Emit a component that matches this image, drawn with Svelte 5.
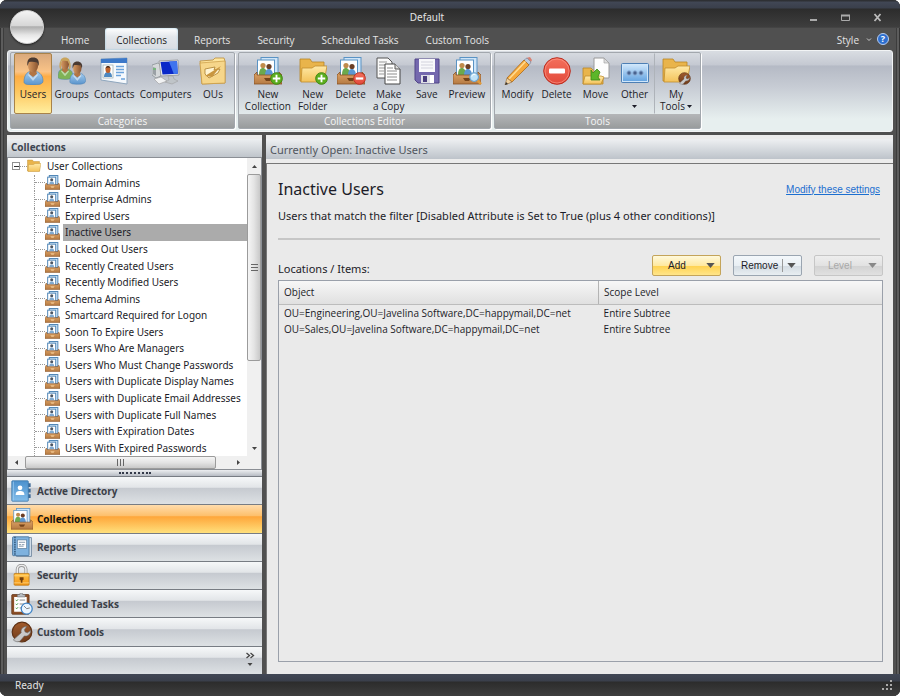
<script>
  const tabs = ['Home', 'Collections', 'Reports', 'Security', 'Scheduled Tasks', 'Custom Tools'];

  const groups = [
    {
      name: 'Categories',
      size: 'categories',
      items: [
        { icon: 'user', lines: ['Users'], active: true },
        { icon: 'group', lines: ['Groups'] },
        { icon: 'contacts', lines: ['Contacts'] },
        { icon: 'computer', lines: ['Computers'] },
        { icon: 'ou', lines: ['OUs'] }
      ]
    },
    {
      name: 'Collections Editor',
      size: 'editor',
      items: [
        { icon: 'collection', badge: 'add', lines: ['New', 'Collection'] },
        { icon: 'folder', badge: 'add', lines: ['New', 'Folder'] },
        { icon: 'collection', badge: 'remove', lines: ['Delete'] },
        { icon: 'copy', lines: ['Make', 'a Copy'] },
        { icon: 'save', lines: ['Save'] },
        { icon: 'collection', badge: 'search', lines: ['Preview'] }
      ]
    },
    {
      name: 'Tools',
      size: 'tools',
      items: [
        { icon: 'pencil', lines: ['Modify'] },
        { icon: 'delete', lines: ['Delete'] },
        { icon: 'move', lines: ['Move'] },
        { icon: 'other', lines: ['Other'], menu: true },
        { icon: 'folder', badge: 'wrench', lines: ['My', 'Tools'], menu: true, divided: true }
      ]
    }
  ];

  const collections = [
    'Domain Admins',
    'Enterprise Admins',
    'Expired Users',
    'Inactive Users',
    'Locked Out Users',
    'Recently Created Users',
    'Recently Modified Users',
    'Schema Admins',
    'Smartcard Required for Logon',
    'Soon To Expire Users',
    'Users Who Are Managers',
    'Users Who Must Change Passwords',
    'Users with Duplicate Display Names',
    'Users with Duplicate Email Addresses',
    'Users with Duplicate Full Names',
    'Users with Expiration Dates',
    'Users With Expired Passwords'
  ];

  const sections = [
    { icon: 'directory', name: 'Active Directory' },
    { icon: 'collection', name: 'Collections' },
    { icon: 'report', name: 'Reports' },
    { icon: 'lock', name: 'Security' },
    { icon: 'tasks', name: 'Scheduled Tasks' },
    { icon: 'wrench', name: 'Custom Tools' }
  ];

  const rows = [
    { object: 'OU=Engineering,OU=Javelina Software,DC=happymail,DC=net', scope: 'Entire Subtree' },
    { object: 'OU=Sales,OU=Javelina Software,DC=happymail,DC=net', scope: 'Entire Subtree' }
  ];

  let activeTab = $state('Collections');
  let selected = $state('Inactive Users');
  let section = $state('Collections');
</script>

{#snippet person(hair, shirt)}
  <path d="M1 25c0-8 4-11 9-11s10 3 10 10c0 3-4 4-10 4s-9-1-9-3z" fill={shirt} stroke="#4d82b4" stroke-width=".6" />
  <path d="M7 13h6l1 4-4 3-4-3z" fill="#b27544" />
  <ellipse cx="10" cy="9" rx="5" ry="6.500" fill="url(#skin)" />
  <path d="M4.500 9C3.500 3 6 .5 10 .5s7 2.500 5.500 8.500L14 5.500c-3-1-5-1-8-.5z" fill={hair} />
  <path d="M6 17l4 4 4-4 1 1-5 6-5-6z" fill="#fff" opacity=".5" />
{/snippet}

{#snippet wrenchDisc()}
  <circle cx="14" cy="14" r="12.500" fill="url(#brown)" stroke="#5e3114" stroke-width="1.500" />
  <path d="M3 24L13 15c-1-5 2-8 7-8l-3 4 1 3 3 1 4-3c0 5-4 8-8 7l-6 7c-3 1-6 0-8-2z" fill="#c9c9c9" stroke="#666" stroke-width=".8" />
{/snippet}

{#snippet icon(name)}
  <svg class="icon" viewBox="0 0 28 28" aria-hidden="true">
    {#if name === 'user'}
      <g transform="translate(4 0)">{@render person('#4a3a32', 'url(#shirt)')}</g>
    {:else if name === 'group'}
      <g transform="translate(-1 0) scale(.8)">
        {@render person('#c9a45c', '#7fb356')}
        <path d="M5 6c-2 3-1 8 0 9M15 6c2 3 1 8 0 9" fill="none" stroke="#c9a45c" stroke-width="2" />
      </g>
      <g transform="translate(11 4) scale(.83)">{@render person('#4a3a32', 'url(#shirt)')}</g>
    {:else if name === 'contacts'}
      <path d="M1 2l26-1v26L1 23z" fill="#f5f9fd" stroke="#8ea6bd" />
      <path d="M1 2l26-1v5L1 6z" fill="#3c78c8" />
      <rect x="3" y="8" width="10" height="13" fill="#fff" stroke="#9aa" stroke-width=".7" />
      <path d="M4 20c0-4 2-5 4-5s4 1 4 5z" fill="#4c88c0" />
      <ellipse cx="8" cy="12.500" rx="2.500" ry="3.500" fill="#c0622a" />
      <path d="M5.500 12c0-4 5-4 5 0l-1-1.500H6.500z" fill="#33221a" />
      <path d="M16 9.500h8M16 12.500h8M16 15.500h8M16 18.500h5M21 22h4" stroke="#6ba3dc" stroke-width="1.500" />
    {:else if name === 'computer'}
      <path d="M0 8l6-2 3 2v11l-5 2-4-3z" fill="#d5d8da" stroke="#83898e" stroke-width=".7" />
      <path d="M1 10l3 1v8l-3-2z" fill="#9aa0a5" />
      <path d="M1 12h3" stroke="#5c5" />
      <path d="M7 4l19-1 1 15-18 1z" fill="#e8ebee" stroke="#888" stroke-width=".7" />
      <path d="M8.500 5l16.500-.8.800 12.500L10.500 17.500z" fill="#0a28c8" />
      <path d="M17 4.600l8-.4.800 12.500-4 .2z" fill="#3f74ee" />
      <path d="M16 19h5l1 3 4 2-6 3-7-2 4-2z" fill="#bfc4c8" stroke="#999" stroke-width=".5" />
      <path d="M2 22l7-2 6 4-8 3z" fill="#f1f2f3" stroke="#9a9a9a" stroke-width=".6" />
    {:else if name === 'ou'}
      <path d="M1 4l13-1 2-2h9l1 3v22L3 27z" fill="url(#gold)" stroke="#bd8d36" stroke-width=".8" />
      <path d="M1 6l25-2v22L3 27z" fill="#f6d68a" stroke="#c99b45" stroke-width=".7" />
      <path d="M6 12l10-2-1 3 6-1-2 4-9 5-4-4z" fill="#fff4d2" stroke="#a97d2e" stroke-width=".8" />
      <path d="M6 19l16-10-9 11z" fill="#c9963f" />
    {:else if name === 'collection'}
      <rect x="7" y=".5" width="17" height="19" fill="#cfe5f8" stroke="#5a93c4" />
      <rect x="3.500" y="3" width="17" height="17" fill="#fff" stroke="#5a93c4" />
      <path d="M5 18c0-6 2-7 4-7s4 2 4 7z" fill="#6ba94e" />
      <path d="M11 19c0-6 2-7 4-7s4 2 4 7z" fill="#5b97d2" />
      <circle cx="9" cy="8.500" r="2.600" fill="#c08b4c" />
      <circle cx="15" cy="9.500" r="2.600" fill="#6b3e24" />
      <path d="M0 18l3-3v3h22v-3l3 3v9H0z" fill="url(#wood)" stroke="#885225" stroke-width=".8" />
      <path d="M10 21h8l-2 3h-4z" fill="#754319" />
    {:else if name === 'leaf'}
      <rect x="8" y="1" width="16" height="17" fill="#d7e9f8" stroke="#4b83b5" stroke-width="1.800" />
      <rect x="5" y="4" width="15" height="15" fill="#fff" stroke="#4b83b5" stroke-width="1.800" />
      <circle cx="12.500" cy="9" r="2.800" fill="#4b5563" />
      <path d="M8 17c0-4 2-5 4.500-5s4.500 1 4.500 5z" fill="#7fa9d0" />
      <path d="M0 18l3-3v3h22v-3l3 3v9H0z" fill="url(#wood)" stroke="#885225" />
      <path d="M10 21h8l-2 3h-4z" fill="#f0c48e" />
    {:else if name === 'folder'}
      <path d="M1 2h10l2 3h12v19H1z" fill="#e9b44b" stroke="#b98523" stroke-width=".8" />
      <path d="M3 11h10l3-2h12l-3 16H2z" fill="url(#gold)" stroke="#c08d2d" stroke-width=".8" />
    {:else if name === 'copy'}
      <path d="M2 1h11l4 4v16H2z" fill="#fafafa" stroke="#555" />
      <path d="M4 5h8M4 8h10M4 11h8M4 14h5M4 17h5" stroke="#999" />
      <path d="M10 7h10l5 5v15H10z" fill="#fff" stroke="#444" />
      <path d="M20 7v5h5" fill="#ddd" stroke="#555" />
      <path d="M12 11h6M12 14h10M12 17h10M12 20h10M12 23h10" stroke="#8d8d8d" />
    {:else if name === 'save'}
      <path d="M2 2h24v24H5l-3-3z" fill="#7468ae" stroke="#514588" />
      <rect x="6" y="2" width="16" height="13" fill="#f8f8fb" />
      <path d="M8 5h12M8 8h12M8 11h12" stroke="#d2d2dd" />
      <rect x="8" y="18" width="13" height="8" fill="#dedee5" />
      <rect x="10" y="19" width="4" height="6" fill="#493d7d" />
      <path d="M17 18h4v8h-4z" fill="#fff" />
    {:else if name === 'pencil'}
      <path d="M22 1l4-1 2 3-2 4-4-3z" fill="#d88273" />
      <path d="M20 3l3-2 4 4-2 3z" fill="#bccadb" stroke="#75879b" stroke-width=".6" />
      <path d="M20 3l5 5L8 25l-5-4z" fill="#f6a93b" stroke="#aa6a1d" stroke-width=".8" />
      <path d="M21.500 4.500L5 22" stroke="#ffdc93" stroke-width="1.500" />
      <path d="M3 21l5 4-7 3z" fill="#efd1a1" stroke="#926327" stroke-width=".6" />
      <path d="M2 25l2 2-3 1z" fill="#333" />
    {:else if name === 'delete'}
      <circle cx="14" cy="14" r="13.300" fill="url(#red)" stroke="#ba2e20" />
      <circle cx="14" cy="14" r="12" fill="none" stroke="#ff9f8f" stroke-width=".6" />
      <rect x="6" y="11.500" width="16" height="5" rx="1" fill="#fff" />
    {:else if name === 'move'}
      <path d="M1 11h8l2 2h10v14H1z" fill="#e9b44b" stroke="#b98523" stroke-width=".8" />
      <path d="M12 1h10l5 5v15H12z" fill="#fdfdfd" stroke="#9a9a9a" />
      <path d="M22 1v5h5z" fill="#ddd" stroke="#9a9a9a" stroke-width=".6" />
      <path d="M3 19h16l3 1-3 7H1z" fill="url(#gold)" stroke="#c08d2d" stroke-width=".8" />
      <path d="M18 15l-3-3-4 4-2-3v10h9l-2-3z" fill="#5cb629" stroke="#3b8614" stroke-width=".8" />
    {:else if name === 'other'}
      <rect x=".5" y="6.500" width="27" height="19" rx="1" fill="url(#sky)" stroke="#4d7fb4" />
      <rect x="1.500" y="7.500" width="25" height="17" fill="none" stroke="#cfe6fa" />
      <g fill="#49638f" stroke="#8fb0d8">
        <circle cx="8" cy="16" r="2.200" />
        <circle cx="14" cy="16" r="2.200" />
        <circle cx="20" cy="16" r="2.200" />
      </g>
    {:else if name === 'directory'}
      <path d="M21 4h4v5h-4zM21 11h4v5h-4zM21 18h4v5h-4z" fill="#3d6b99" />
      <rect x="1" y="1" width="21" height="26" rx="1" fill="url(#book)" stroke="#3b75a8" />
      <path d="M3 2v24" stroke="#9dccf1" />
      <circle cx="11.500" cy="10" r="3" fill="#fff" />
      <path d="M6 19c0-4 2-5 5.500-5s5.500 1 5.500 5z" fill="#fff" />
    {:else if name === 'report'}
      <path d="M7 2h19v24H7z" fill="#d9e4ee" stroke="#5f7b94" />
      <rect x="2" y="1" width="21" height="24" rx="1" fill="#7fb2de" stroke="#3e6c96" />
      <path d="M5 1v24" stroke="#33597d" stroke-width="2" stroke-dasharray="2 1" />
      <rect x="8" y="5" width="12" height="11" fill="#fff" stroke="#496f91" stroke-width=".8" />
      <path d="M10 8h8M10 11h3M14 11h3M10 13h6" stroke="#6a8299" />
    {:else if name === 'lock'}
      <path d="M8 14V7c0-7 11-7 11 0v7" fill="none" stroke="#999" stroke-width="4" />
      <path d="M8 14V7c0-7 11-7 11 0v7" fill="none" stroke="#eee" stroke-width="1.800" />
      <rect x="4" y="12" width="19" height="15" rx="1" fill="url(#orange)" stroke="#bd7613" />
      <path d="M4 15h19M4 24h19" stroke="#ffd98a" />
      <path d="M11 17h5v3l-1.500 1v3h-2v-3L11 20z" fill="#74400d" />
    {:else if name === 'tasks'}
      <rect x="1" y="2" width="22" height="25" rx="1" fill="#8d5028" stroke="#613315" />
      <path d="M4 5h16v19H4z" fill="#fff" />
      <path d="M8 5V2h3c0-3 4-3 4 0h3v3z" fill="#b9bec3" stroke="#666" stroke-width=".7" />
      <path d="M6 9l1.500 1L9 8M6 14l1.500 1L9 13M6 19l1.500 1L9 18" fill="none" stroke="#379034" />
      <path d="M11 9h7M11 14h6M11 19h3" stroke="#6a6a6a" />
      <circle cx="20" cy="20" r="7" fill="#eaf5ff" stroke="#3f83c5" stroke-width="1.600" />
      <path d="M16.500 16.500L20 20l4-1" fill="none" stroke="#666" />
    {:else if name === 'wrench'}
      {@render wrenchDisc()}
    {/if}
  </svg>
{/snippet}

{#snippet badge(name)}
  <svg class="badge" viewBox="0 0 14 14" aria-hidden="true">
    {#if name === 'add'}
      <circle cx="7" cy="7" r="6.300" fill="#5cae1f" stroke="#3d8310" />
      <path d="M7 3v8M3 7h8" stroke="#fff" stroke-width="2" />
    {:else if name === 'remove'}
      <circle cx="7" cy="7" r="6.300" fill="url(#red)" stroke="#b92d20" />
      <path d="M3 7h8" stroke="#fff" stroke-width="2.400" />
    {:else if name === 'search'}
      <path d="M8 8l5 5" stroke="#e09a3a" stroke-width="2.600" />
      <circle cx="5.500" cy="5.500" r="4.700" fill="#bfe2f8" stroke="#6ba2cd" stroke-width="1.200" />
      <path d="M3 5c0-2 2-3 4-2" fill="none" stroke="#fff" />
    {:else}
      <g transform="scale(.5)">{@render wrenchDisc()}</g>
    {/if}
  </svg>
{/snippet}

{#snippet arrow()}
  <svg class="arrow" viewBox="0 0 10 6" aria-hidden="true"><path d="M0 0h10L5 6z" fill="currentColor" /></svg>
{/snippet}

<svg class="defs" aria-hidden="true">
  <defs>
    <linearGradient id="skin"><stop stop-color="#d79a62" /><stop offset="1" stop-color="#8b5530" /></linearGradient>
    <linearGradient id="shirt" x2="0" y2="1"><stop stop-color="#a8cff0" /><stop offset="1" stop-color="#5a94cc" /></linearGradient>
    <linearGradient id="gold" x2="0" y2="1"><stop stop-color="#ffe9a6" /><stop offset="1" stop-color="#f3c25a" /></linearGradient>
    <linearGradient id="wood" x2="0" y2="1"><stop stop-color="#e0a566" /><stop offset="1" stop-color="#b57a43" /></linearGradient>
    <linearGradient id="red" x2="0" y2="1"><stop stop-color="#f4705c" /><stop offset="1" stop-color="#e2493a" /></linearGradient>
    <linearGradient id="sky" x2="0" y2="1"><stop stop-color="#d5eafc" /><stop offset="1" stop-color="#5d9fdf" /></linearGradient>
    <linearGradient id="book" x2="0" y2="1"><stop stop-color="#4c91cd" /><stop offset="1" stop-color="#82bdea" /></linearGradient>
    <linearGradient id="orange" x2="0" y2="1"><stop stop-color="#ffc144" /><stop offset="1" stop-color="#f39718" /></linearGradient>
    <linearGradient id="brown" x2="0" y2="1"><stop stop-color="#a15b2c" /><stop offset="1" stop-color="#6f3b1b" /></linearGradient>
  </defs>
</svg>

<div class="window">
  <header class="titlebar">
    <button class="orb" aria-label="Application menu"></button>
    <span class="title">Default</span>
    <div class="window-buttons">
      <button aria-label="Minimize"><svg viewBox="0 0 9 9"><path d="M1 7h7" stroke="#aaa" stroke-width="2" /></svg></button>
      <button aria-label="Maximize"><svg viewBox="0 0 9 9"><path d="M.5 2.500h8v5h-8z" fill="none" stroke="#aaa" /><path d="M0 2.500h9" stroke="#aaa" stroke-width="2" /></svg></button>
      <button aria-label="Close"><svg viewBox="0 0 9 9"><path d="M1.500 1l6 7M7.500 1l-6 7" stroke="#bbb" stroke-width="1.800" /></svg></button>
    </div>
  </header>

  <nav class="tabs">
    {#each tabs as tab}
      <button class="tab" class:active={activeTab === tab} onclick={() => (activeTab = tab)}>{tab}</button>
    {/each}
    <button class="style-menu">
      Style
      <svg viewBox="0 0 6 4" aria-hidden="true"><path d="M1 .5l2 2 2-2" fill="none" stroke="#ccc" /></svg>
    </button>
    <button class="help" aria-label="Help">?</button>
  </nav>

  <div class="ribbon">
    {#each groups as group}
      <section class="group {group.size}">
        <div class="group-items">
          {#each group.items as item}
            <button class="tool" class:active={item.active} class:divided={item.divided}>
              <span class="tool-icon">
                {@render icon(item.icon)}
                {#if item.badge}{@render badge(item.badge)}{/if}
              </span>
              {#each item.lines as line, i}
                <span class="tool-line">
                  {line}{#if item.menu && i > 0}{@render arrow()}{/if}
                </span>
              {/each}
              {#if item.menu && item.lines.length === 1}
                <span class="tool-line">{@render arrow()}</span>
              {/if}
            </button>
          {/each}
        </div>
        <div class="group-name">{group.name}</div>
      </section>
    {/each}
  </div>

  <div class="workspace">
    <aside class="sidebar">
      <h2 class="sidebar-title">Collections</h2>
      <div class="tree-box">
        <ul class="tree">
          <li class="root">
            <button class="toggle" aria-label="Collapse"></button>
            <span class="root-line"></span>
            {@render icon('folder')}
            <span>User Collections</span>
          </li>
          {#each collections as name}
            <li class="leaf">
              {@render icon('leaf')}
              <button class="leaf-name" class:selected={selected === name} onclick={() => (selected = name)}>{name}</button>
            </li>
          {/each}
        </ul>
        <div class="vscroll">
          <button class="up" aria-label="Scroll up">{@render arrow()}</button>
          <div class="thumb"><span class="grip"></span></div>
          <button class="down" aria-label="Scroll down">{@render arrow()}</button>
        </div>
        <div class="hscroll">
          <button class="left" aria-label="Scroll left">{@render arrow()}</button>
          <div class="thumb"><span class="grip"></span></div>
          <button class="right" aria-label="Scroll right">{@render arrow()}</button>
        </div>
        <div class="corner"></div>
      </div>
      <div class="splitter"><span></span></div>
      <nav class="sections">
        {#each sections as item}
          <button class="section" class:active={section === item.name} onclick={() => (section = item.name)}>
            {@render icon(item.icon)}
            {item.name}
          </button>
        {/each}
        <button class="section overflow" aria-label="Configure buttons">
          <svg viewBox="0 0 10 16" aria-hidden="true">
            <path d="M1.500 1l3 2.500-3 2.500M5.500 1l3 2.500-3 2.500" fill="none" stroke="#444" stroke-width="1.300" />
            <path d="M2.500 11h5L5 14z" fill="#444" />
          </svg>
        </button>
      </nav>
    </aside>

    <main class="content">
      <div class="open-bar">Currently Open: Inactive Users</div>
      <div class="panel">
        <div class="heading">
          <h1>Inactive Users</h1>
          <a href="#settings">Modify these settings</a>
        </div>
        <p>Users that match the filter [Disabled Attribute is Set to True (plus 4 other conditions)]</p>
        <hr />
        <div class="list-bar">
          <span class="list-label">Locations / Items:</span>
          <button class="action add"><span>Add</span>{@render arrow()}</button>
          <button class="action remove"><span>Remove</span><i></i>{@render arrow()}</button>
          <button class="action" disabled><span>Level</span>{@render arrow()}</button>
        </div>
        <div class="list">
          <table>
            <thead>
              <tr><th>Object</th><th>Scope Level</th></tr>
            </thead>
            <tbody>
              {#each rows as row}
                <tr><td>{row.object}</td><td>{row.scope}</td></tr>
              {/each}
            </tbody>
          </table>
        </div>
      </div>
    </main>
  </div>

  <footer class="status">
    <span>Ready</span>
    <svg viewBox="0 0 10 10" aria-hidden="true">
      <path d="M8 0h2v2H8zM4 4h2v2H4zM8 4h2v2H8zM0 8h2v2H0zM4 8h2v2H4zM8 8h2v2H8z" fill="#aaa" />
    </svg>
  </footer>
</div>

<style>
  :global(body) {
    background: #fff;
  }

  .window {
    display: flex;
    flex-direction: column;
    box-sizing: border-box;
    height: 100vh;
    min-height: 600px;
    border-radius: 7px;
    overflow: hidden;
    background: #505050;
    box-shadow: inset 1px 0 #333, inset -1px 0 #333, inset 3px 0 #5c5c5c, inset -3px 0 #5c5c5c, inset 4px 0 #3c3c3c, inset -4px 0 #3c3c3c;
    font-family: 'Noto Sans', 'Open Sans', sans-serif;
    font-size: 11px;
    color: #1c1c28;
  }

  button {
    padding: 0;
    border: none;
    background: none;
    font: inherit;
    color: inherit;
    cursor: pointer;
  }

  .defs {
    position: absolute;
    width: 0;
    height: 0;
  }

  .icon {
    display: block;
    flex: none;
    width: 28px;
    height: 28px;
  }

  .arrow {
    width: 5px;
    height: 3px;
  }

  .titlebar {
    position: relative;
    display: flex;
    flex: none;
    align-items: center;
    height: 28px;
    padding-top: 6px;
    box-sizing: border-box;
    background: linear-gradient(#2e3034 0 1px, #414755 2px, #3a3f4b 8px, #2c2c2c 9px, #3e3e3e 27px, #4a4a4a);
    color: #e4e4e4;
    font-size: 10px;
  }

  .orb {
    position: absolute;
    left: 10px;
    top: 10px;
    width: 34px;
    height: 34px;
    border-radius: 50%;
    border: 1px solid #cfcfcf;
    background: linear-gradient(#f4f4f4, #d6d6d6 47%, #adadad 49%, #e6e6e6 75%, #fff);
    box-shadow: 0 1px 2px #222;
  }

  .title {
    flex: 1;
    padding-left: 45px;
    text-align: center;
  }

  .window-buttons {
    display: flex;
    gap: 23px;
    padding-right: 18px;
  }

  .window-buttons button,
  .window-buttons svg {
    display: block;
    width: 9px;
    height: 9px;
  }

  .tabs {
    display: flex;
    flex: none;
    align-items: stretch;
    gap: 5px;
    height: 22px;
    padding: 0 11px 0 50px;
    color: #e4e4e4;
    font-family: 'Open Sans', 'Noto Sans', sans-serif;
    font-size: 10px;
    font-weight: 500;
  }

  .tab {
    padding: 2px 11px 0;
    border-radius: 3px 3px 0 0;
  }

  .tab.active {
    background: linear-gradient(#fff, #e3e7eb 40%, #d8dce2);
    color: #222;
    box-shadow: inset 0 0 2px #8cc4e0;
  }

  .style-menu {
    display: flex;
    align-items: center;
    gap: 7px;
    margin-left: auto;
    padding-top: 2px;
  }

  .style-menu svg {
    width: 6px;
    height: 4px;
  }

  .help {
    align-self: center;
    width: 12px;
    height: 12px;
    border: 1px solid #b7cdf0;
    border-radius: 50%;
    background: #2d6fd0;
    color: #fff;
    font-size: 9px;
    font-weight: 700;
    line-height: 10px;
  }

  .ribbon {
    display: flex;
    flex: none;
    gap: 3px;
    height: 82px;
    margin: 0 7px;
    padding: 1px 2px 2px;
    box-sizing: border-box;
    border: 1px solid #f2f4f5;
    border-radius: 3px;
    background: linear-gradient(#d9dde2, #c5c9d2 17%, #b5bac5 19%, #c7ccd4 45%, #e7efef 85%, #e7efef);
    font-family: 'Open Sans', 'Noto Sans', sans-serif;
    font-size: 10px;
    font-weight: 500;
  }

  .group {
    display: flex;
    flex-direction: column;
    box-sizing: border-box;
    border: 1px solid #a2a7ad;
    border-radius: 2px;
    box-shadow: 1px 1px 0 #fff;
  }

  .categories {
    width: 225px;
  }

  .editor {
    width: 253px;
  }

  .tools {
    width: 207px;
  }

  .group-items {
    display: flex;
    flex: 1;
    padding: 0 2px 0 3px;
  }

  .tool {
    display: flex;
    flex: 1 0 auto;
    flex-direction: column;
    align-items: center;
    min-width: 38px;
    box-sizing: border-box;
    padding: 3px 1px 0;
    border: 1px solid transparent;
    line-height: 12px;
  }

  .tools .tool {
    flex: none;
    min-width: 39px;
  }

  .tool.active {
    flex: none;
    border-color: #a8834a;
    border-radius: 2px;
    background: linear-gradient(#d9a97c, #fac387 30%, #fdac45 38%, #fdc35a 60%, #ffee9e);
  }

  .tools .tool.divided {
    flex: 1;
    border-left: 1px solid #aeb3b9;
  }

  .tool-icon {
    position: relative;
    margin-bottom: 3px;
  }

  .badge {
    position: absolute;
    right: -1px;
    bottom: 0;
    width: 13px;
    height: 13px;
  }

  .tool-line {
    display: flex;
    align-items: center;
    gap: 2px;
    min-height: 12px;
    white-space: nowrap;
  }

  .group-name {
    flex: none;
    height: 14px;
    background: linear-gradient(#b4b6b8, #999c9d);
    color: #f6f6f6;
    line-height: 14px;
    text-align: center;
  }

  .workspace {
    display: flex;
    flex: 1;
    gap: 4px;
    min-height: 0;
    margin: 3px 7px 0;
  }

  .sidebar {
    display: flex;
    flex: none;
    flex-direction: column;
    width: 255px;
    background: #eaeaea;
    font-size: 10px;
  }

  .sidebar-title {
    flex: none;
    height: 18px;
    margin: 4px 0 0;
    padding-left: 4px;
    background: linear-gradient(#eceff1, #bfc5cb);
    color: #3c4450;
    font-family: 'Open Sans', 'Noto Sans', sans-serif;
    font-size: 10px;
    font-weight: 700;
    line-height: 17px;
  }

  .tree-box {
    display: grid;
    flex: 1;
    grid-template: minmax(0, 1fr) 13px / minmax(0, 1fr) 14px;
    min-height: 0;
    border: 1px solid #8b8f95;
    background: #fff;
  }

  .tree {
    display: grid;
    grid-auto-rows: minmax(0, 1fr);
    margin: 0;
    padding: 0;
    list-style: none;
    overflow: hidden;
  }

  .root,
  .leaf {
    display: flex;
    align-items: center;
    min-width: 0;
    white-space: nowrap;
  }

  .root {
    padding-left: 4px;
  }

  .root .icon {
    width: 14px;
    height: 14px;
    margin-right: 6px;
  }

  .toggle {
    width: 8px;
    height: 8px;
    border: 1px solid #919191;
    background: linear-gradient(#333, #333) center / 5px 1px no-repeat;
  }

  .root-line {
    width: 7px;
    border-top: 1px dotted #999;
  }

  .leaf {
    margin-left: 26px;
    border-left: 1px dotted #999;
  }

  .leaf::before {
    content: '';
    width: 10px;
    border-top: 1px dotted #999;
  }

  .leaf .icon {
    width: 15px;
    height: 15px;
    margin-right: 3px;
  }

  .leaf-name {
    flex: 1;
    align-self: stretch;
    padding-left: 2px;
    text-align: left;
    line-height: 16px;
    white-space: nowrap;
  }

  .leaf-name.selected {
    background: #ababab;
  }

  .vscroll,
  .hscroll,
  .corner {
    display: flex;
    background: #f0f0f0;
    color: #444;
  }

  .vscroll {
    flex-direction: column;
  }

  .vscroll button {
    display: grid;
    flex: none;
    place-items: center;
    height: 16px;
  }

  .hscroll button {
    display: grid;
    flex: none;
    place-items: center;
    width: 17px;
  }

  .up .arrow {
    transform: rotate(180deg);
  }

  .left .arrow {
    transform: rotate(90deg);
  }

  .right .arrow {
    transform: rotate(-90deg);
  }

  .hscroll .right {
    margin-left: auto;
  }

  .vscroll .down {
    margin-top: auto;
  }

  .thumb {
    display: grid;
    place-items: center;
    border: 1px solid #9b9b9b;
    border-radius: 2px;
  }

  .vscroll .thumb {
    flex: 0 1 62%;
    background: linear-gradient(90deg, #f5f5f5, #e4e4e4 50%, #c8c8c8);
  }

  .hscroll .thumb {
    flex: 0 1 79%;
    background: linear-gradient(#f5f5f5, #e4e4e4 50%, #c8c8c8);
  }

  .grip {
    width: 7px;
    height: 7px;
    background: repeating-linear-gradient(#666 0 1px, transparent 1px 3px);
  }

  .hscroll .grip {
    background: repeating-linear-gradient(90deg, #666 0 1px, transparent 1px 3px);
  }

  .splitter {
    display: grid;
    flex: none;
    place-items: center;
    height: 6px;
    background: linear-gradient(#eceef0, #b7bcc4);
  }

  .splitter span {
    width: 32px;
    border-top: 2px dotted #333a4a;
  }

  .sections {
    display: flex;
    flex: none;
    flex-direction: column;
    height: 198px;
    font-family: 'Open Sans', 'Noto Sans', sans-serif;
  }

  .section {
    display: flex;
    flex: 1;
    align-items: center;
    gap: 4px;
    padding-left: 4px;
    border-top: 1px solid #777c83;
    background: linear-gradient(#f6f8f9, #e2e5e8 38%, #c6cad0 42%, #dde1e4);
    color: #3b4048;
    font-weight: 700;
  }

  .section .icon {
    width: 22px;
    height: 22px;
  }

  .section.active {
    background: linear-gradient(#ffdcac, #fdc06c 38%, #fea63a 42%, #ffe07c);
    color: #111;
  }

  .overflow {
    justify-content: flex-end;
    padding-right: 7px;
  }

  .overflow svg {
    width: 10px;
    height: 16px;
  }

  .content {
    display: flex;
    flex: 1;
    flex-direction: column;
    min-width: 0;
    background: #ececec;
  }

  .open-bar {
    flex: none;
    height: 20px;
    margin: 4px 0 4px;
    padding-left: 4px;
    background: linear-gradient(#eef0f2, #bdc3ca);
    color: #50555d;
    line-height: 21px;
  }

  .panel {
    display: flex;
    flex: 1;
    flex-direction: column;
    min-height: 0;
    padding: 14px 10px 12px 11px;
    border-top: 1px solid #777;
    border-left: 1px solid #777;
    background: #eaeaea;
  }

  .heading {
    display: flex;
    align-items: center;
    justify-content: space-between;
    padding-right: 3px;
  }

  h1 {
    margin: 0;
    font-size: 16px;
    font-weight: 400;
    line-height: 22px;
  }

  a {
    color: #1c6fd0;
    font-family: 'Liberation Sans', sans-serif;
    font-size: 10px;
  }

  p {
    margin: 8px 0 14px;
    line-height: 16px;
  }

  hr {
    align-self: stretch;
    margin: 0 3px 14px 0;
    border: none;
    border-top: 2px solid #c6c6c6;
  }

  .list-bar {
    display: flex;
    flex: none;
    align-items: center;
    gap: 12px;
    height: 22px;
    margin-bottom: 4px;
  }

  .list-label {
    flex: 1;
    padding-top: 6px;
  }

  .action {
    display: flex;
    align-items: center;
    justify-content: space-between;
    width: 69px;
    height: 21px;
    box-sizing: border-box;
    padding: 0 5px 0 7px;
    border: 1px solid #9aa5b1;
    border-radius: 2px;
    background: linear-gradient(#f4f8fb, #e9eff4 50%, #d3dbe2 52%, #e8eef2);
    font-family: 'Liberation Sans', sans-serif;
    font-size: 10px;
  }

  .action .arrow {
    width: 9px;
    height: 5px;
    color: #555;
  }

  .action i {
    width: 1px;
    height: 13px;
    background: #999;
  }

  .action.add {
    padding-left: 15px;
    border-color: #c4a45a;
    background: linear-gradient(#fff9dc, #ffe9a0 50%, #ffd250 52%, #ffe58a);
  }

  .action:disabled {
    padding-left: 13px;
    border-color: #c6c6c6;
    background: linear-gradient(#eee, #e2e2e2 50%, #d2d2d2 52%, #e0e0e0);
    color: #a8a8a8;
  }

  .action:disabled .arrow {
    color: #888;
  }

  .list {
    flex: 1;
    border: 1px solid #9aa0aa;
    background: #eaeaea;
  }

  table {
    width: 100%;
    border-collapse: collapse;
    table-layout: fixed;
    font-family: 'Open Sans', 'Noto Sans', sans-serif;
    font-size: 10px;
  }

  th,
  td {
    box-sizing: border-box;
    padding: 0 5px;
  }

  th {
    height: 23px;
    border-bottom: 1px solid #bcbcbc;
    background: linear-gradient(#f7f7f7, #e0e0e0);
    font-weight: 500;
    text-align: left;
  }

  th:first-child {
    width: 53%;
    border-right: 1px solid #b4b4b4;
  }

  td {
    height: 16px;
    line-height: 16px;
    white-space: nowrap;
  }

  .status {
    display: flex;
    flex: none;
    align-items: center;
    justify-content: space-between;
    height: 22px;
    padding: 0 8px 0 15px;
    background: linear-gradient(#414755, #3a3f4b 7px, #2c2c2c 8px, #3e3e3e);
    color: #e4e4e4;
    font-size: 10px;
  }

  .status svg {
    width: 10px;
    height: 10px;
  }
</style>
